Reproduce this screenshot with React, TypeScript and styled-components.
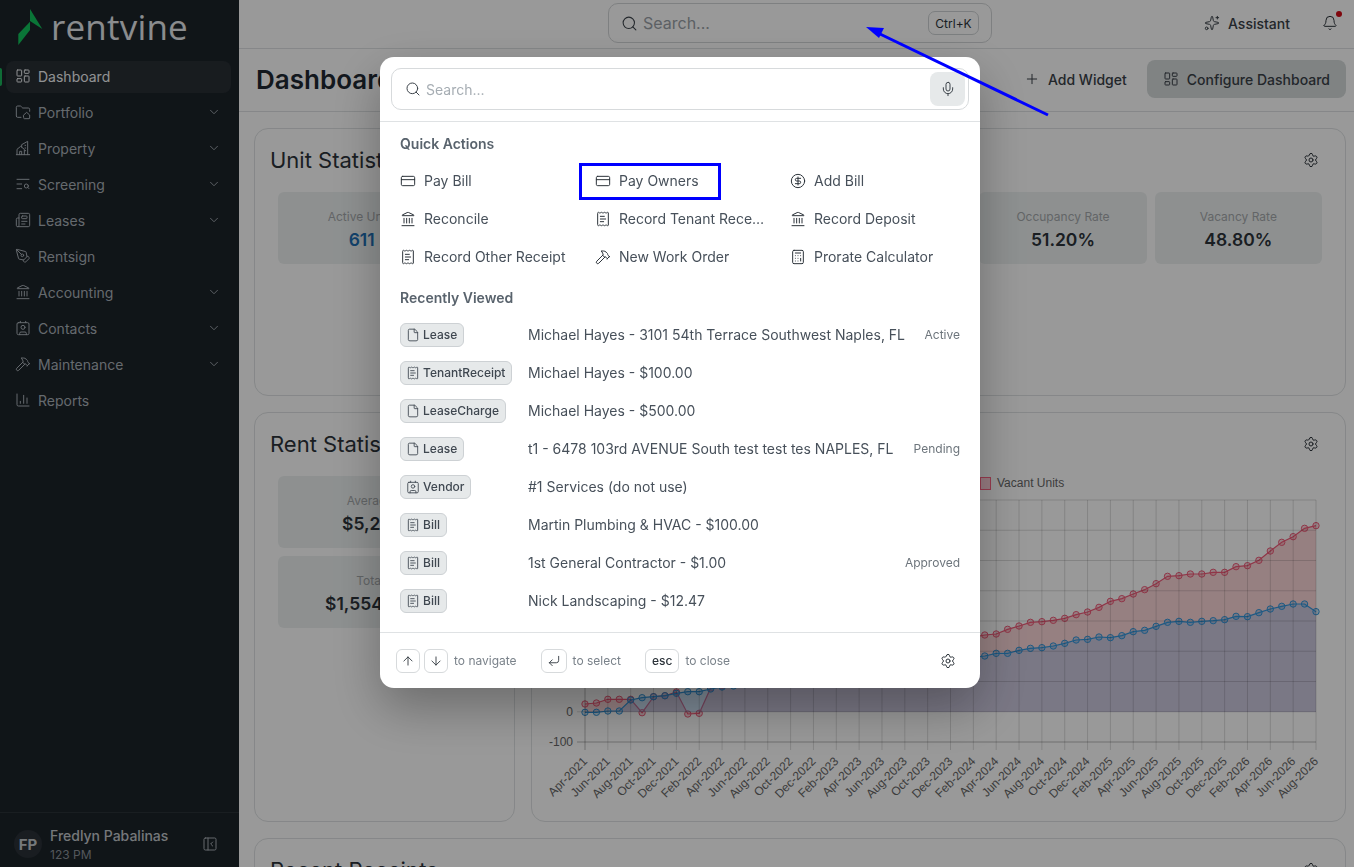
import React from "react";
import styled, { createGlobalStyle } from "styled-components";
import {
  ArrowDown,
  ArrowUp,
  Bell,
  Calculator,
  ChartColumn,
  ChevronDown,
  CircleDollarSign,
  Contact,
  CornerDownLeft,
  CreditCard,
  File,
  Hammer,
  Landmark,
  LayoutDashboard,
  Mic,
  Newspaper,
  PanelLeftClose,
  PenTool,
  Plus,
  ReceiptText,
  Search,
  Settings,
  Sparkles,
  TextSearch,
} from "lucide-react";

const GlobalStyle = createGlobalStyle`
  * { box-sizing: border-box; }
  html, body { margin: 0; height: 100%; }
  body {
    font-family: Inter, "Noto Sans", "Liberation Sans", sans-serif;
    background: #fff;
    color: #1f2933;
    overflow: hidden;
  }
  .lucide {
    width: 16px;
    height: 16px;
    flex: none;
    stroke-width: 1.5;
  }
`;

const Shell = styled.div`
  display: flex;
  height: 100vh;
  overflow: hidden;
`;

/* sidebar */

const Sidebar = styled.aside`
  width: 239px;
  flex: none;
  display: flex;
  flex-direction: column;
  background: #1c2329;
`;

const LogoRow = styled.div`
  height: 59px;
  flex: none;
  display: flex;
  align-items: flex-start;
  gap: 8px;
  padding: 9px 0 0 18px;
`;

const LogoText = styled.span`
  font-family: "Open Sans", sans-serif;
  font-size: 35px;
  line-height: 36px;
  font-weight: 400;
  color: #e6eaed;
  letter-spacing: 0.2px;
`;

const Nav = styled.nav`
  flex: 1;
  display: flex;
  flex-direction: column;
  gap: 4px;
  padding: 2px 8px 0 6px;
`;

const NavItem = styled.a<{ $active?: boolean }>`
  position: relative;
  height: 32px;
  display: flex;
  align-items: center;
  gap: 7px;
  padding: 0 10px 2px 9px;
  border-radius: 8px;
  font-size: 14px;
  color: ${(p) => (p.$active ? "#f1f3f4" : "#a9b1b8")};
  background: ${(p) => (p.$active ? "#282f35" : "transparent")};
`;

const Chevron = styled(ChevronDown)`
  margin-left: auto;
  &.lucide {
    width: 14px;
    height: 14px;
  }
`;

const ActiveMark = styled.span`
  position: absolute;
  left: -6px;
  top: 7px;
  width: 2px;
  height: 18px;
  background: #19b45a;
  border-radius: 0 2px 2px 0;
`;

const Profile = styled.div`
  height: 55px;
  flex: none;
  display: flex;
  align-items: center;
  gap: 8px;
  padding: 8px 21px 0 14px;
  border-top: 1px solid #2b3238;
  color: #aab1b7;
`;

const Avatar = styled.div`
  width: 28px;
  height: 28px;
  border-radius: 50%;
  display: grid;
  place-items: center;
  background: #2a3138;
  color: #c3c8cc;
  font-size: 15px;
  font-weight: 700;
`;

const ProfileText = styled.div`
  flex: 1;
  display: flex;
  flex-direction: column;
  gap: 3px;
`;

const ProfileName = styled.span`
  font-size: 14px;
  font-weight: 500;
  color: #c3c8cc;
`;

const ProfileSub = styled.span`
  font-size: 12px;
  color: #8b9299;
`;

/* main column */

const Main = styled.main`
  flex: 1;
  min-width: 0;
  display: flex;
  flex-direction: column;
  background: #fff;
`;

const TopBar = styled.header`
  height: 49px;
  flex: none;
  display: grid;
  grid-template-columns: 1fr 384px 1fr;
  align-items: center;
  padding: 0 16px 2px 23px;
  border-bottom: 1px solid #dfe2e4;
`;

const GlobalSearch = styled.div`
  grid-column: 2;
  height: 40px;
  display: flex;
  align-items: center;
  gap: 5px;
  padding: 0 12px 0 12px;
  border: 1px solid #d3d6d8;
  border-radius: 10px;
  font-size: 16px;
  color: #9aa1a7;

  > svg.lucide {
    width: 17px;
    height: 17px;
    color: #3d444b;
  }
`;

const Shortcut = styled.kbd`
  margin-left: auto;
  width: 51px;
  height: 24px;
  display: grid;
  place-items: center;
  border: 1px solid #cfd3d5;
  border-radius: 7px;
  font-family: Inter, sans-serif;
  font-size: 12px;
  font-weight: 400;
  color: #2c333a;
`;

const TopRight = styled.div`
  justify-self: end;
  display: flex;
  align-items: center;
  gap: 32px;
`;

const Assistant = styled.div`
  display: flex;
  align-items: center;
  gap: 8px;
  font-size: 14px;
  font-weight: 500;
  color: #3a4148;
`;

const BellWrap = styled.div`
  position: relative;
  display: flex;
  color: #2c333a;
`;

const BellDot = styled.span`
  position: absolute;
  top: -4px;
  right: -4px;
  width: 6px;
  height: 6px;
  border-radius: 50%;
  background: #d40b16;
`;

const PageHead = styled.div`
  height: 63px;
  flex: none;
  display: flex;
  align-items: center;
  justify-content: space-between;
  padding: 0 8px 2px 17px;
  border-bottom: 1px solid #dfe2e4;
`;

const PageTitle = styled.h1`
  margin: 0;
  font-size: 26px;
  font-weight: 600;
  color: #1f2933;
`;

const HeadActions = styled.div`
  display: flex;
  align-items: center;
  gap: 4px;
`;

const HeadButton = styled.button<{ $filled?: boolean }>`
  height: 38px;
  display: flex;
  align-items: center;
  gap: 8px;
  padding: 0 16px;
  border: 0;
  border-radius: 8px;
  background: ${(p) => (p.$filled ? "#d5dada" : "transparent")};
  font-family: inherit;
  font-size: 14px;
  font-weight: 500;
  color: #3a4148;
`;

const Content = styled.div`
  flex: 1;
  min-height: 0;
  overflow: hidden;
  display: flex;
  flex-direction: column;
  gap: 16px;
  padding: 16px 8px 0 15px;
`;

const Card = styled.section`
  flex: none;
  border: 1px solid #dfe2e4;
  border-radius: 14px;
  background: #fff;
`;

const UnitCard = styled(Card)`
  height: 268px;
`;

const CardHead = styled.div`
  height: 63px;
  display: flex;
  align-items: center;
  justify-content: space-between;
  padding: 0 26px 2px 15px;
`;

const CardTitle = styled.h2`
  margin: 0;
  font-size: 22px;
  font-weight: 400;
  color: #2c333a;
`;

const Count = styled.span`
  margin-left: 8px;
  font-size: 14px;
  font-weight: 600;
  color: #1f6fb5;
`;

const Gear = styled(Settings)`
  color: #2c333a;
`;

const TileRow = styled.div`
  display: grid;
  grid-template-columns: repeat(6, 1fr);
  gap: 8px;
  padding: 0 23px;
`;

const Tile = styled.div`
  height: 72px;
  display: flex;
  flex-direction: column;
  align-items: center;
  justify-content: center;
  gap: 5px;
  padding-top: 2px;
  background: #edf1f1;
  border-radius: 6px;
`;

const TileLabel = styled.span`
  font-size: 12px;
  white-space: nowrap;
  color: #a5a9ac;
`;

const TileValue = styled.span<{ $link?: boolean }>`
  font-size: 17.5px;
  font-weight: 600;
  white-space: nowrap;
  color: ${(p) => (p.$link ? "#1f6fb5" : "#2c333a")};
`;

const SplitRow = styled.div`
  flex: none;
  display: grid;
  grid-template-columns: 261px 1fr;
  gap: 16px;
`;

const StatCard = styled(Card)`
  height: 410px;
`;

const TileStack = styled.div`
  display: flex;
  flex-direction: column;
  gap: 8px;
  padding: 0 23px;
`;

const ChartSvg = styled.svg`
  display: block;
  width: 813px;
  height: 345px;
`;

const ReceiptsCard = styled(Card)`
  height: 200px;
`;

/* command palette */

const Backdrop = styled.div`
  position: fixed;
  inset: 0;
  display: flex;
  justify-content: center;
  align-items: flex-start;
  padding: 57px 0 0 6px;
  background: rgba(0, 0, 0, 0.4);
`;

const Palette = styled.div`
  width: 600px;
  background: #fff;
  border-radius: 14px;
  box-shadow: 0 20px 50px rgba(0, 0, 0, 0.3);
  color: #47505a;
`;

const PaletteSearch = styled.div`
  padding: 11px;
  border-bottom: 1px solid #dfe2e4;
`;

const SearchBox = styled.div`
  height: 42px;
  display: flex;
  align-items: center;
  gap: 5px;
  padding: 0 3px 0 13px;
  border: 1px solid #d7dadc;
  border-radius: 10px;
  font-size: 14px;
  color: #a6adb3;

  > svg {
    color: #3d444b;
  }
`;

const MicButton = styled.div`
  margin-left: auto;
  width: 35px;
  height: 34px;
  display: grid;
  place-items: center;
  background: #e6e9ea;
  border-radius: 8px;
  color: #3d444b;
`;

const Section = styled.div`
  padding: 12px 20px 0;
`;

const SectionTitle = styled.h3`
  margin: 0 0 8px;
  height: 20px;
  font-size: 14px;
  line-height: 20px;
  font-weight: 600;
  color: #59636d;
`;

const ActionGrid = styled.div`
  display: grid;
  grid-template-columns: repeat(3, 175px);
  column-gap: 20px;
`;

const Action = styled.div`
  height: 38px;
  min-width: 0;
  display: flex;
  align-items: center;
  gap: 8px;
  padding: 0 3px 1px 0;
  font-size: 14px;

  > svg {
    color: #2c333a;
  }
`;

const ActionLabel = styled.span`
  overflow: hidden;
  white-space: nowrap;
  text-overflow: ellipsis;
`;

const RecentRow = styled.div`
  height: 38px;
  display: grid;
  grid-template-columns: 128px 1fr auto;
  align-items: center;
  font-size: 14px;
  padding-bottom: 1px;
`;

const Badge = styled.span`
  justify-self: start;
  height: 24px;
  display: inline-flex;
  align-items: center;
  gap: 3px;
  padding: 0 6px 0 5px;
  background: #e6e9ea;
  border: 1px solid #cdd1d4;
  border-radius: 6px;
  font-size: 12px;
  font-weight: 500;
  color: #3f4750;

  > svg.lucide {
    width: 14px;
    height: 14px;
  }
`;

const RecentStatus = styled.span`
  font-size: 12px;
  color: #6d757c;
`;

const PaletteFooter = styled.div`
  height: 56px;
  margin-top: 12px;
  display: flex;
  align-items: center;
  gap: 24px;
  padding: 0 24px 0 16px;
  border-top: 1px solid #dfe2e4;
`;

const Hint = styled.div`
  display: flex;
  align-items: center;
  gap: 4px;
  font-size: 12px;
  color: #7a828a;

  > span {
    margin-left: 2px;
  }
`;

const Key = styled.kbd<{ $pad: number }>`
  height: 24px;
  padding: 0 ${(p) => p.$pad}px;
  display: grid;
  place-items: center;
  border: 1px solid #d7dadc;
  border-radius: 6px;
  font-family: Inter, sans-serif;
  font-size: 12px;
  font-weight: 500;
  color: #2c333a;

  > svg.lucide {
    width: 14px;
    height: 14px;
  }
`;

const FooterGear = styled(Settings)`
  margin-left: auto;
  color: #2c333a;
`;

/* blue markup drawn over the screenshot */

const MarkupBox = styled.div`
  position: fixed;
  left: 579px;
  top: 163px;
  width: 142px;
  height: 37px;
  border: 3px solid #0000ff;
`;

const MarkupArrow = styled.svg`
  position: fixed;
  left: 860px;
  top: 20px;
  pointer-events: none;
`;

/* icons lucide has no match for */

function FolderHouse() {
  return (
    <svg className="lucide" viewBox="0 0 24 24" fill="none" stroke="currentColor" strokeLinecap="round" strokeLinejoin="round">
      <path d="M9 20H4a2 2 0 0 1-2-2V5a2 2 0 0 1 2-2h3.9a2 2 0 0 1 1.69.9l.81 1.2a2 2 0 0 0 1.67.9H20a2 2 0 0 1 2 2v3" />
      <path d="M13 16.5l4.5-4 4.5 4V21a1 1 0 0 1-1 1h-7a1 1 0 0 1-1-1z" />
    </svg>
  );
}

function EstateBuilding() {
  return (
    <svg className="lucide" viewBox="0 0 24 24" fill="none" stroke="currentColor" strokeLinecap="round" strokeLinejoin="round">
      <path d="M2 22h20" />
      <path d="M3 22v-8l5.5-4.5L14 14v8" />
      <path d="M10 10.5V7l9-5v20" />
      <path d="M7 22v-5h3v5" />
      <path d="M15 8h1M15 12h1M15 16h1" />
    </svg>
  );
}

/* data */

const navItems = [
  { label: "Dashboard", icon: LayoutDashboard, active: true },
  { label: "Portfolio", icon: FolderHouse, more: true },
  { label: "Property", icon: EstateBuilding, more: true },
  { label: "Screening", icon: TextSearch, more: true },
  { label: "Leases", icon: Newspaper, more: true },
  { label: "Rentsign", icon: PenTool },
  { label: "Accounting", icon: Landmark, more: true },
  { label: "Contacts", icon: Contact, more: true },
  { label: "Maintenance", icon: Hammer, more: true },
  { label: "Reports", icon: ChartColumn },
];

const actions = [
  { label: "Pay Bill", icon: CreditCard },
  { label: "Pay Owners", icon: CreditCard },
  { label: "Add Bill", icon: CircleDollarSign },
  { label: "Reconcile", icon: Landmark },
  { label: "Record Tenant Receipt", icon: ReceiptText },
  { label: "Record Deposit", icon: Landmark },
  { label: "Record Other Receipt", icon: ReceiptText },
  { label: "New Work Order", icon: Hammer },
  { label: "Prorate Calculator", icon: Calculator },
];

const recent = [
  { type: "Lease", icon: File, name: "Michael Hayes - 3101 54th Terrace Southwest Naples, FL", status: "Active" },
  { type: "TenantReceipt", icon: ReceiptText, name: "Michael Hayes - $100.00" },
  { type: "LeaseCharge", icon: File, name: "Michael Hayes - $500.00" },
  { type: "Lease", icon: File, name: "t1 - 6478 103rd AVENUE South test test tes NAPLES, FL", status: "Pending" },
  { type: "Vendor", icon: Contact, name: "#1 Services (do not use)" },
  { type: "Bill", icon: ReceiptText, name: "Martin Plumbing & HVAC - $100.00" },
  { type: "Bill", icon: ReceiptText, name: "1st General Contractor - $1.00", status: "Approved" },
  { type: "Bill", icon: ReceiptText, name: "Nick Landscaping - $12.47" },
];

/* chart geometry: page pixels, so the viewBox below starts at the card corner */

const X0 = 585;
const X1 = 1316;
const STEP = (X1 - X0) / 64;
const Y_TOP = 500;
const Y_BOTTOM = 742;
const Y_ZERO = 712;

const ramp = (from: number, to: number, count: number) =>
  Array.from({ length: count }, (_, i) => from + ((to - from) * (i + 1)) / (count + 1));

const fromZoom = (values: number[]) => values.map((v) => 470 + v / 3);

const redTail = fromZoom([
  495, 492, 478, 468, 457, 455, 451, 445, 434, 426, 412, 394, 386, 372, 359, 341, 319, 317, 312, 312, 307, 307, 290,
  287, 271, 243, 217, 200, 175, 167,
]);
const blueTail = fromZoom([
  558, 550, 550, 541, 535, 533, 528, 520, 510, 508, 501, 503, 497, 485, 481, 469, 457, 454, 457, 454, 452, 449, 439,
  440, 428, 417, 409, 402, 402, 425,
]);

const redY = [
  704, 703, 699.3, 699.3, 699.3, 712.7, 696.7, 695.7, 692, 714, 713.3, 688, ...ramp(688, redTail[0], 23), ...redTail,
];
const blueY = [
  712.3, 712.3, 711, 711, 700, 697.7, 696.7, 695.7, 693.3, 691.7, 691.7, 689, 687, 686, ...ramp(686, blueTail[0], 21),
  ...blueTail,
];

const MONTHS = ["Feb", "Apr", "Jun", "Aug", "Oct", "Dec"];
const tickLabels = Array.from({ length: 33 }, (_, i) => {
  const total = 2021 * 6 + 1 + i;
  return `${MONTHS[total % 6]}-${Math.floor(total / 6)}`;
});

const yTicks = Array.from({ length: 9 }, (_, i) => ({
  y: Y_TOP + ((Y_BOTTOM - Y_TOP) * i) / 8,
  label: 700 - i * 100,
}));

const xAt = (i: number) => X0 + i * STEP;

function Series({ ys, rgb, fill }: { ys: number[]; rgb: string; fill: string }) {
  const line = ys.map((y, i) => `${xAt(i)},${y}`).join(" ");
  const area = `${X0},${Y_ZERO} ${line} ${X1},${Y_ZERO}`;
  return (
    <g>
      <polygon points={area} fill={fill} />
      <polyline points={line} fill="none" stroke={`rgb(${rgb})`} strokeWidth={1.2} />
      {ys.map((y, i) => (
        <circle key={i} cx={xAt(i)} cy={y} r={3.2} fill={`rgba(${rgb},.25)`} stroke={`rgb(${rgb})`} strokeWidth={1} />
      ))}
    </g>
  );
}

function UnitsChart() {
  return (
    <ChartSvg viewBox="532 476 813 345">
      <rect x={980.5} y={477.5} width={10} height={12} fill="rgba(255,99,132,.3)" stroke="rgb(255,99,132)" />
      <text x={997} y={487} fontFamily="Liberation Sans" fontSize={12} fill="#666">
        Vacant Units
      </text>
      <Series ys={redY} rgb="240,90,120" fill="rgba(235,90,100,.25)" />
      <Series ys={blueY} rgb="50,150,220" fill="rgba(100,170,235,.3)" />
      {yTicks.map((t) => (
        <g key={t.label}>
          <line x1={577} x2={X1} y1={t.y} y2={t.y} stroke={t.label === -100 ? "rgba(0,0,0,.28)" : "rgba(0,0,0,.14)"} />
          <text x={573} y={t.y + 4} textAnchor="end" fontFamily="Liberation Sans" fontSize={12} fill="#666">
            {t.label}
          </text>
        </g>
      ))}
      {tickLabels.map((label, i) => {
        const x = X0 + i * STEP * 2;
        return (
          <g key={label}>
            <line x1={x} x2={x} y1={Y_TOP} y2={750} stroke={i === 0 ? "rgba(0,0,0,.28)" : "rgba(0,0,0,.14)"} />
            <text
              x={x + 3}
              y={762}
              textAnchor="end"
              fontFamily="Liberation Sans"
              fontSize={12}
              fill="#666"
              transform={`rotate(-45 ${x + 3} 762)`}
            >
              {label}
            </text>
          </g>
        );
      })}
    </ChartSvg>
  );
}

function CommandPalette() {
  return (
    <Backdrop>
      <Palette>
        <PaletteSearch>
          <SearchBox>
            <Search />
            Search...
            <MicButton>
              <Mic />
            </MicButton>
          </SearchBox>
        </PaletteSearch>
        <Section>
          <SectionTitle>Quick Actions</SectionTitle>
          <ActionGrid>
            {actions.map((a) => (
              <Action key={a.label}>
                <a.icon />
                <ActionLabel>{a.label}</ActionLabel>
              </Action>
            ))}
          </ActionGrid>
        </Section>
        <Section>
          <SectionTitle>Recently Viewed</SectionTitle>
          {recent.map((r) => (
            <RecentRow key={r.name}>
              <Badge>
                <r.icon />
                {r.type}
              </Badge>
              <span>{r.name}</span>
              {r.status && <RecentStatus>{r.status}</RecentStatus>}
            </RecentRow>
          ))}
        </Section>
        <PaletteFooter>
          <Hint>
            <Key $pad={4}>
              <ArrowUp />
            </Key>
            <Key $pad={4}>
              <ArrowDown />
            </Key>
            <span>to navigate</span>
          </Hint>
          <Hint>
            <Key $pad={5}>
              <CornerDownLeft />
            </Key>
            <span>to select</span>
          </Hint>
          <Hint>
            <Key $pad={6}>esc</Key>
            <span>to close</span>
          </Hint>
          <FooterGear />
        </PaletteFooter>
      </Palette>
    </Backdrop>
  );
}

export default function App() {
  return (
    <>
      <GlobalStyle />
      <Shell>
        <Sidebar>
          <LogoRow>
            <svg width="25" height="36" viewBox="0 0 25 36">
              <path d="M0.3 25 L12 12.7 V21 L0.3 36 Z" fill="#12c45c" />
              <path d="M12 0 L24.3 20 L12 12 Z" fill="#12c45c" />
            </svg>
            <LogoText>rentvine</LogoText>
          </LogoRow>
          <Nav>
            {navItems.map((n) => (
              <NavItem key={n.label} $active={n.active}>
                {n.active && <ActiveMark />}
                <n.icon />
                {n.label}
                {n.more && <Chevron />}
              </NavItem>
            ))}
          </Nav>
          <Profile>
            <Avatar>FP</Avatar>
            <ProfileText>
              <ProfileName>Fredlyn Pabalinas</ProfileName>
              <ProfileSub>123 PM</ProfileSub>
            </ProfileText>
            <PanelLeftClose />
          </Profile>
        </Sidebar>
        <Main>
          <TopBar>
            <GlobalSearch>
              <Search />
              Search...
              <Shortcut>Ctrl+K</Shortcut>
            </GlobalSearch>
            <TopRight>
              <Assistant>
                <Sparkles />
                Assistant
              </Assistant>
              <BellWrap>
                <Bell />
                <BellDot />
              </BellWrap>
            </TopRight>
          </TopBar>
          <PageHead>
            <PageTitle>Dashboard</PageTitle>
            <HeadActions>
              <HeadButton>
                <Plus />
                Add Widget
              </HeadButton>
              <HeadButton $filled>
                <LayoutDashboard />
                Configure Dashboard
              </HeadButton>
            </HeadActions>
          </PageHead>
          <Content>
            <UnitCard>
              <CardHead>
                <CardTitle>Unit Statistics</CardTitle>
                <Gear />
              </CardHead>
              <TileRow>
                <Tile>
                  <TileLabel>Active Units</TileLabel>
                  <TileValue $link>611</TileValue>
                </Tile>
                <Tile />
                <Tile />
                <Tile />
                <Tile>
                  <TileLabel>Occupancy Rate</TileLabel>
                  <TileValue>51.20%</TileValue>
                </Tile>
                <Tile>
                  <TileLabel>Vacancy Rate</TileLabel>
                  <TileValue>48.80%</TileValue>
                </Tile>
              </TileRow>
            </UnitCard>
            <SplitRow>
              <StatCard>
                <CardHead>
                  <CardTitle>Rent Statistics</CardTitle>
                </CardHead>
                <TileStack>
                  <Tile>
                    <TileLabel>Average Rent</TileLabel>
                    <TileValue>$5,210.50</TileValue>
                  </Tile>
                  <Tile>
                    <TileLabel>Total Rent</TileLabel>
                    <TileValue>$1,554,120.00</TileValue>
                  </Tile>
                </TileStack>
              </StatCard>
              <StatCard>
                <CardHead>
                  <span />
                  <Gear />
                </CardHead>
                <UnitsChart />
              </StatCard>
            </SplitRow>
            <ReceiptsCard>
              <CardHead>
                <CardTitle>
                  Recent Receipts
                  <Count>12</Count>
                </CardTitle>
                <Gear />
              </CardHead>
            </ReceiptsCard>
          </Content>
        </Main>
      </Shell>
      <CommandPalette />
      <MarkupBox />
      <MarkupArrow width="200" height="110" viewBox="860 20 200 110">
        <line x1="1048" y1="115" x2="880" y2="34" stroke="#0000ff" strokeWidth="3" />
        <polygon points="866,27 884,28 879,38" fill="#0000ff" />
      </MarkupArrow>
    </>
  );
}
